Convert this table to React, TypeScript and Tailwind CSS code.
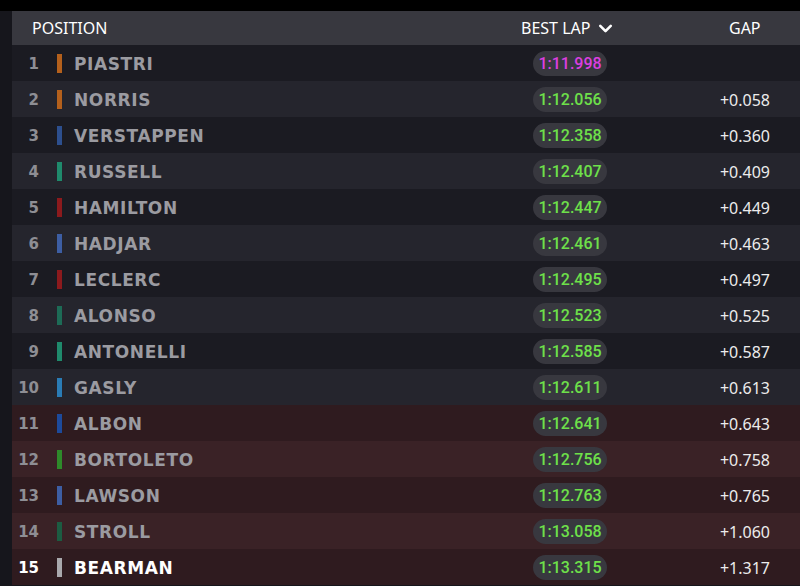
import { ChevronDown } from "lucide-react";

type Row = {
  pos: number;
  name: string;
  team: string;
  lap: string;
  gap: string;
  best?: boolean;
};

const rows: Row[] = [
  { pos: 1, name: "PIASTRI", team: "#b4601c", lap: "1:11.998", gap: "", best: true },
  { pos: 2, name: "NORRIS", team: "#b4601c", lap: "1:12.056", gap: "+0.058" },
  { pos: 3, name: "VERSTAPPEN", team: "#2d4f8e", lap: "1:12.358", gap: "+0.360" },
  { pos: 4, name: "RUSSELL", team: "#1f8a6c", lap: "1:12.407", gap: "+0.409" },
  { pos: 5, name: "HAMILTON", team: "#8c1a1d", lap: "1:12.447", gap: "+0.449" },
  { pos: 6, name: "HADJAR", team: "#3d5ea3", lap: "1:12.461", gap: "+0.463" },
  { pos: 7, name: "LECLERC", team: "#8c1a1d", lap: "1:12.495", gap: "+0.497" },
  { pos: 8, name: "ALONSO", team: "#1d6b56", lap: "1:12.523", gap: "+0.525" },
  { pos: 9, name: "ANTONELLI", team: "#1f8a6c", lap: "1:12.585", gap: "+0.587" },
  { pos: 10, name: "GASLY", team: "#2a7cb5", lap: "1:12.611", gap: "+0.613" },
  { pos: 11, name: "ALBON", team: "#1d4a9b", lap: "1:12.641", gap: "+0.643" },
  { pos: 12, name: "BORTOLETO", team: "#2e8a2a", lap: "1:12.756", gap: "+0.758" },
  { pos: 13, name: "LAWSON", team: "#3d5ea3", lap: "1:12.763", gap: "+0.765" },
  { pos: 14, name: "STROLL", team: "#1c5c42", lap: "1:13.058", gap: "+1.060" },
  { pos: 15, name: "BEARMAN", team: "#a9a9ad", lap: "1:13.315", gap: "+1.317" },
];

function rowBg(pos: number) {
  if (pos > 10) return pos % 2 === 0 ? "bg-[#3a2226]" : "bg-[#2f1b1f]";
  return pos % 2 === 0 ? "bg-[#25252d]" : "bg-[#1b1b22]";
}

export default function App() {
  return (
    <div
      className="w-[800px] h-[586px] bg-[#16161c] overflow-hidden"
      style={{ fontFamily: "'Noto Sans', 'Open Sans', sans-serif" }}
    >
      <div className="h-[11px] bg-black" />
      <div className="ml-[12px]">
        {/* header */}
        <div className="flex items-center h-[34px] bg-[#38383f] text-[16px] text-white leading-none">
          <div className="pl-[20px] w-[509px]">POSITION</div>
          <div className="w-[208px] flex items-center">
            <span>BEST LAP</span>
            <ChevronDown className="ml-[5px] w-[21px] h-[21px]" strokeWidth={3} />
          </div>
          <div>GAP</div>
        </div>

        {rows.map((r) => {
          const last = r.pos === 15;
          return (
            <div key={r.pos} className={`flex items-center h-[36px] leading-none ${rowBg(r.pos)}`}>
              <div
                className={`w-[27px] pt-[2px] text-right text-[15px] font-bold ${last ? "text-white" : "text-[#8e8e94]"}`}
                style={{ fontFamily: "'DejaVu Sans', sans-serif" }}
              >
                {r.pos}
              </div>
              <div className="ml-[18px] w-[5px] h-[19px]" style={{ backgroundColor: r.team }} />
              <div
                className={`ml-[12px] w-[459px] pt-[2px] text-[17px] font-bold tracking-[0.6px] ${last ? "text-white" : "text-[#9b9ba1]"}`}
                style={{ fontFamily: "'DejaVu Sans', sans-serif" }}
              >
                {r.name}
              </div>
              <div className="w-[74px]">
                <div
                  className={`h-[25px] w-[74px] pt-[2px] rounded-full bg-[#38383f] flex items-center justify-center text-[16px] font-medium ${
                    r.best ? "text-[#dc3fe0]" : "text-[#6ee04a]"
                  }`}
                  style={{ fontFamily: "Roboto, sans-serif" }}
                >
                  {r.lap}
                </div>
              </div>
              <div className="w-[163px] pt-[1px] text-right text-[16px] text-[#ececec]">{r.gap}</div>
            </div>
          );
        })}
      </div>
    </div>
  );
}
